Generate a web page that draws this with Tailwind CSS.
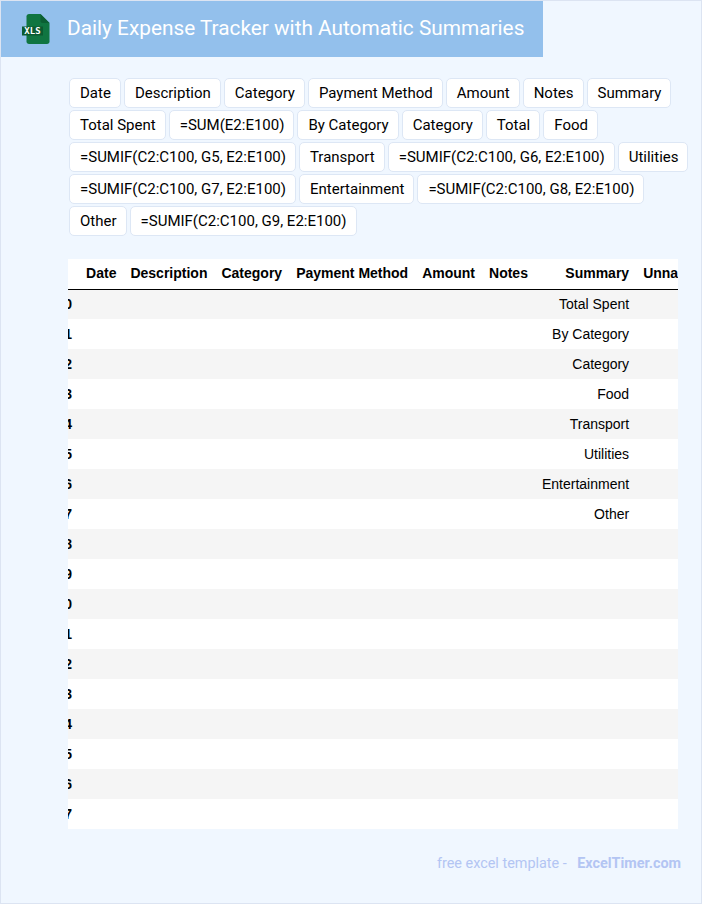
<!DOCTYPE html>
<html lang="en">
<head>
    <meta charset="UTF-8">
    <meta name="viewport" content="width=device-width, initial-scale=1.0">
    <title>Daily Expense Tracker with Automatic Summaries</title>
    <script src="https://cdn.jsdelivr.net/npm/@tailwindcss/browser@4"></script>
</head>
<body class="h-[904px] overflow-hidden bg-[#f0f7ff] border border-[#dce4f2] font-['Roboto',sans-serif] text-black">
    <!-- header -->
    <div class="w-[542px] h-[56px] bg-[#93c0ec] flex items-center">
        <svg class="ml-[21px] mr-[16px]" width="29" height="32" viewBox="0 0 29 32">
            <path d="M7 1C5.5 1 4.5 2 4.5 3.5V28.5C4.5 30 5.5 31 7 31H25C26.5 31 27.5 30 27.5 28.5V10L18.5 1Z" fill="#107541"/>
            <path d="M18.5 1V8C18.5 9.2 19.3 10 20.5 10H27.5Z" fill="#0b5f33"/>
            <rect x="0" y="13.5" width="21" height="9" fill="#0b5a30"/>
            <text x="10.5" y="21" text-anchor="middle" fill="#fff" font-size="9" font-weight="bold" font-family="'DejaVu Sans Mono',monospace">XLS</text>
        </svg>
        <h1 class="text-[20.8px] leading-none text-white mb-[1px]">Daily Expense Tracker with Automatic Summaries</h1>
    </div>

    <!-- column chips -->
    <div class="ml-[68px] mt-[21px] w-[622px] flex flex-wrap gap-x-[3px] gap-y-[2px] text-[15px]">
        <span class="h-[30px] pl-[10px] pr-[9px] flex items-center bg-white border border-[#dde7f5] rounded-[5px]">Date</span>
        <span class="h-[30px] pl-[10px] pr-[9px] flex items-center bg-white border border-[#dde7f5] rounded-[5px]">Description</span>
        <span class="h-[30px] pl-[10px] pr-[9px] flex items-center bg-white border border-[#dde7f5] rounded-[5px]">Category</span>
        <span class="h-[30px] pl-[10px] pr-[9px] flex items-center bg-white border border-[#dde7f5] rounded-[5px]">Payment Method</span>
        <span class="h-[30px] pl-[10px] pr-[9px] flex items-center bg-white border border-[#dde7f5] rounded-[5px]">Amount</span>
        <span class="h-[30px] pl-[10px] pr-[9px] flex items-center bg-white border border-[#dde7f5] rounded-[5px]">Notes</span>
        <span class="h-[30px] pl-[10px] pr-[9px] flex items-center bg-white border border-[#dde7f5] rounded-[5px]">Summary</span>
        <span class="h-[30px] pl-[10px] pr-[9px] flex items-center bg-white border border-[#dde7f5] rounded-[5px]">Total Spent</span>
        <span class="h-[30px] pl-[10px] pr-[9px] flex items-center bg-white border border-[#dde7f5] rounded-[5px]">=SUM(E2:E100)</span>
        <span class="h-[30px] pl-[10px] pr-[9px] flex items-center bg-white border border-[#dde7f5] rounded-[5px]">By Category</span>
        <span class="h-[30px] pl-[10px] pr-[9px] flex items-center bg-white border border-[#dde7f5] rounded-[5px]">Category</span>
        <span class="h-[30px] pl-[10px] pr-[9px] flex items-center bg-white border border-[#dde7f5] rounded-[5px]">Total</span>
        <span class="h-[30px] pl-[10px] pr-[9px] flex items-center bg-white border border-[#dde7f5] rounded-[5px]">Food</span>
        <span class="h-[30px] pl-[10px] pr-[9px] flex items-center bg-white border border-[#dde7f5] rounded-[5px]">=SUMIF(C2:C100, G5, E2:E100)</span>
        <span class="h-[30px] pl-[10px] pr-[9px] flex items-center bg-white border border-[#dde7f5] rounded-[5px]">Transport</span>
        <span class="h-[30px] pl-[10px] pr-[9px] flex items-center bg-white border border-[#dde7f5] rounded-[5px]">=SUMIF(C2:C100, G6, E2:E100)</span>
        <span class="h-[30px] pl-[10px] pr-[9px] flex items-center bg-white border border-[#dde7f5] rounded-[5px]">Utilities</span>
        <span class="h-[30px] pl-[10px] pr-[9px] flex items-center bg-white border border-[#dde7f5] rounded-[5px]">=SUMIF(C2:C100, G7, E2:E100)</span>
        <span class="h-[30px] pl-[10px] pr-[9px] flex items-center bg-white border border-[#dde7f5] rounded-[5px]">Entertainment</span>
        <span class="h-[30px] pl-[10px] pr-[9px] flex items-center bg-white border border-[#dde7f5] rounded-[5px]">=SUMIF(C2:C100, G8, E2:E100)</span>
        <span class="h-[30px] pl-[10px] pr-[9px] flex items-center bg-white border border-[#dde7f5] rounded-[5px]">Other</span>
        <span class="h-[30px] pl-[10px] pr-[9px] flex items-center bg-white border border-[#dde7f5] rounded-[5px]">=SUMIF(C2:C100, G9, E2:E100)</span>
    </div>

    <!-- table, clipped on both sides -->
    <div class="ml-[67px] mt-[23px] w-[610px] overflow-hidden bg-white">
        <table class="ml-[-18.5px] border-collapse whitespace-nowrap font-['Liberation_Sans',sans-serif] text-[14px] text-right">
            <thead>
                <tr class="h-[30px] border-b border-black font-bold">
                    <th class="px-[7px]"></th>
                    <th class="px-[7px]">Date</th>
                    <th class="px-[7px]">Description</th>
                    <th class="px-[7px]">Category</th>
                    <th class="px-[7px]">Payment Method</th>
                    <th class="px-[7px]">Amount</th>
                    <th class="px-[7px]">Notes</th>
                    <th class="px-[7px]">Summary</th>
                    <th class="px-[7px]">Unnamed: 7</th>
                </tr>
            </thead>
            <tbody id="rows">
                <tr class="h-[30px] bg-[#f5f5f5]"><th class="px-[7px]">0</th><td></td><td></td><td></td><td></td><td></td><td></td><td class="px-[7px]">Total Spent</td><td></td></tr>
                <tr class="h-[30px]"><th class="px-[7px]">1</th><td></td><td></td><td></td><td></td><td></td><td></td><td class="px-[7px]">By Category</td><td></td></tr>
                <tr class="h-[30px] bg-[#f5f5f5]"><th class="px-[7px]">2</th><td></td><td></td><td></td><td></td><td></td><td></td><td class="px-[7px]">Category</td><td></td></tr>
                <tr class="h-[30px]"><th class="px-[7px]">3</th><td></td><td></td><td></td><td></td><td></td><td></td><td class="px-[7px]">Food</td><td></td></tr>
                <tr class="h-[30px] bg-[#f5f5f5]"><th class="px-[7px]">4</th><td></td><td></td><td></td><td></td><td></td><td></td><td class="px-[7px]">Transport</td><td></td></tr>
                <tr class="h-[30px]"><th class="px-[7px]">5</th><td></td><td></td><td></td><td></td><td></td><td></td><td class="px-[7px]">Utilities</td><td></td></tr>
                <tr class="h-[30px] bg-[#f5f5f5]"><th class="px-[7px]">6</th><td></td><td></td><td></td><td></td><td></td><td></td><td class="px-[7px]">Entertainment</td><td></td></tr>
                <tr class="h-[30px]"><th class="px-[7px]">7</th><td></td><td></td><td></td><td></td><td></td><td></td><td class="px-[7px]">Other</td><td></td></tr>
                <tr class="h-[30px] bg-[#f5f5f5]"><th class="px-[7px]">8</th><td colspan="8"></td></tr>
                <tr class="h-[30px]"><th class="px-[7px]">9</th><td colspan="8"></td></tr>
                <tr class="h-[30px] bg-[#f5f5f5]"><th class="px-[7px]">10</th><td colspan="8"></td></tr>
                <tr class="h-[30px]"><th class="px-[7px]">11</th><td colspan="8"></td></tr>
                <tr class="h-[30px] bg-[#f5f5f5]"><th class="px-[7px]">12</th><td colspan="8"></td></tr>
                <tr class="h-[30px]"><th class="px-[7px]">13</th><td colspan="8"></td></tr>
                <tr class="h-[30px] bg-[#f5f5f5]"><th class="px-[7px]">14</th><td colspan="8"></td></tr>
                <tr class="h-[30px]"><th class="px-[7px]">15</th><td colspan="8"></td></tr>
                <tr class="h-[30px] bg-[#f5f5f5]"><th class="px-[7px]">16</th><td colspan="8"></td></tr>
                <tr class="h-[30px]"><th class="px-[7px]">17</th><td colspan="8"></td></tr>
            </tbody>
        </table>
    </div>

    <!-- footer -->
    <p class="w-[680px] mt-[24px] text-right text-[14.4px] text-[#b3c5f3]">free excel template - <b class="ml-[7px] font-bold">ExcelTimer.com</b></p>
</body>
</html>
